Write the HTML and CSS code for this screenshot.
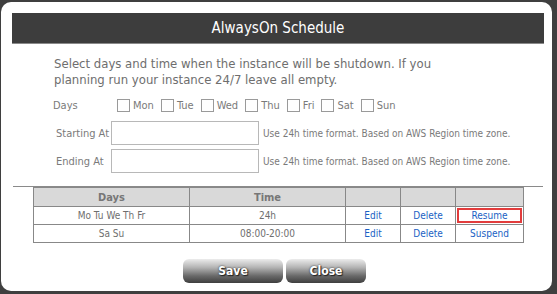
FILE: index.html
```html
<!DOCTYPE html>
<html>
<head>
<meta charset="utf-8">
<link rel="stylesheet" href="styles.css">
</head>
<body>
<div class="dialog">
  <div class="titlebar">AlwaysOn Schedule</div>
  <p class="intro">Select days and time when the instance will be shutdown. If you planning run your instance 24/7 leave all empty.</p>
  <div class="days-row">
    <span class="days-label">Days</span>
    <label class="day"><input type="checkbox" class="cb">Mon</label>
    <label class="day"><input type="checkbox" class="cb">Tue</label>
    <label class="day"><input type="checkbox" class="cb">Wed</label>
    <label class="day"><input type="checkbox" class="cb">Thu</label>
    <label class="day"><input type="checkbox" class="cb">Fri</label>
    <label class="day"><input type="checkbox" class="cb">Sat</label>
    <label class="day"><input type="checkbox" class="cb">Sun</label>
  </div>
  <div class="time-row">
    <span class="time-label">Starting At</span>
    <input type="text" class="time-input">
    <span class="hint">Use 24h time format. Based on AWS Region time zone.</span>
  </div>
  <div class="time-row">
    <span class="time-label">Ending At</span>
    <input type="text" class="time-input">
    <span class="hint">Use 24h time format. Based on AWS Region time zone.</span>
  </div>
  <div class="separator"></div>
  <table class="schedule">
    <thead>
      <tr><th class="c-days">Days</th><th class="c-time">Time</th><th class="c-edit"></th><th class="c-del"></th><th class="c-act"></th></tr>
    </thead>
    <tbody>
      <tr><td>Mo Tu We Th Fr</td><td>24h</td><td class="link">Edit</td><td class="link">Delete</td><td class="link"><span class="selected">Resume</span></td></tr>
      <tr><td>Sa Su</td><td>08:00-20:00</td><td class="link">Edit</td><td class="link">Delete</td><td class="link">Suspend</td></tr>
    </tbody>
  </table>
  <div class="buttons">
    <button class="btn btn-save">Save</button>
    <button class="btn btn-close">Close</button>
  </div>
</div>
</body>
</html>
```
FILE: styles.css
```css
html, body {
  margin: 0;
  padding: 0;
}
body {
  background: #3f3f3f;
  width: 557px;
  height: 294px;
  overflow: hidden;
  padding: 2px 0 0 1px;
  box-sizing: border-box;
  font-family: "DejaVu Sans Condensed", "DejaVu Sans", sans-serif;
}
.dialog {
  width: 551px;
  height: 289px;
  background: #fff;
  border-radius: 10px;
  box-sizing: border-box;
  padding: 11px 8px 0 11px;
}
.titlebar {
  height: 30px;
  background: #3d3d3d;
  border-bottom: 1px solid #8a8a8a;
  color: #fff;
  font-size: 15px;
  line-height: 30px;
  text-align: center;
}
.intro {
  margin: 12px 0 0 42px;
  width: 380px;
  color: #6e6e6e;
  font-size: 13px;
  line-height: 16px;
}
.days-row {
  display: flex;
  align-items: center;
  margin: 9px 0 0 41px;
  height: 16px;
  color: #7a7a7a;
  font-size: 11px;
}
.days-label {
  width: 64px;
}
.day {
  display: flex;
  align-items: center;
  margin-right: 7px;
}
.cb {
  appearance: none;
  -webkit-appearance: none;
  width: 13px;
  height: 13px;
  margin: 0 3px 0 0;
  border: 1px solid #9a9a9a;
  background: #fff;
  box-sizing: border-box;
}
.time-row {
  display: flex;
  align-items: center;
  margin: 8px 0 0 44px;
  height: 24px;
  color: #7a7a7a;
}
.time-row + .time-row {
  margin-top: 4px;
}
.time-label {
  width: 55px;
  flex-shrink: 0;
  white-space: nowrap;
  font-size: 11px;
}
.time-input {
  width: 148px;
  height: 24px;
  flex-shrink: 0;
  box-sizing: border-box;
  border: 1px solid #b8b8b8;
  margin: 0 4px 0 0;
  padding: 0;
}
.hint {
  font-size: 10px;
  color: #7a7a7a;
  white-space: nowrap;
}
.separator {
  margin: 13px 1px 0 1px;
  height: 1px;
  background: #8a8a8a;
}
.schedule {
  margin: 0 0 0 21px;
  border-collapse: collapse;
  width: 491px;
  font-size: 10px;
  color: #6e6e6e;
}
.schedule th, .schedule td {
  border: 1px solid #888;
  text-align: center;
  padding: 0;
}
.schedule th {
  background: #d9d9d9;
  height: 18px;
  color: #777;
  font-size: 11px;
}
.schedule td {
  height: 17px;
}
.c-days { width: 155px; }
.c-time { width: 155px; }
.c-edit { width: 54px; }
.c-del { width: 54px; }
.link {
  color: #1a5fc4;
}
.selected {
  display: block;
  margin: 1px 1px;
  border: 2px solid #e23c3c;
  line-height: 11px;
}
.buttons {
  display: flex;
  justify-content: center;
  gap: 3px;
  margin: 16px 0 0 -7px;
}
.btn {
  height: 24px;
  border: 0;
  border-radius: 6px;
  background: linear-gradient(#ececec 0%, #b4b4b4 35%, #6a6a6a 70%, #3e3e3e 100%);
  color: #fff;
  font-family: inherit;
  font-size: 12px;
  font-weight: 600;
  text-shadow: 0 0 2px #222, 1px 1px 1px #222;
  padding: 0;
}
.btn-save { width: 100px; }
.btn-close { width: 80px; }
```
